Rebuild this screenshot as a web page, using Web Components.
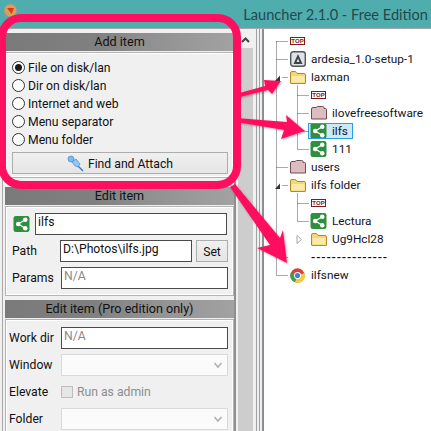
<!DOCTYPE html>
<html>
<head>
<meta charset="utf-8">
<title>Launcher</title>
<style>
  html, body { margin: 0; height: 100%; overflow: hidden; background: #f0f0f0; }
  body { font: 12.2px Roboto, sans-serif; color: #111; }
</style>
</head>
<body>
<launcher-app>
  <lw-titlebar slot="title">Launcher 2.1.0 - Free Edition</lw-titlebar>

  <lw-section slot="left" heading="Add item" gap="9" top="5" bottom="3">
    <lw-radio checked>File on disk/lan</lw-radio>
    <lw-radio>Dir on disk/lan</lw-radio>
    <lw-radio>Internet and web</lw-radio>
    <lw-radio>Menu separator</lw-radio>
    <lw-radio>Menu folder</lw-radio>
    <lw-button wide>Find and Attach</lw-button>
  </lw-section>

  <lw-section slot="left" heading="Edit item" gap="4" top="6" bottom="1">
    <lw-field inset="7" label-width="22" value="ilfs" end="6"><tree-icon slot="lead" kind="share"></tree-icon></lw-field>
    <lw-field inset="6" label-width="48" label="Path" value="D:\Photos\ilfs.jpg" end="41"><lw-button slot="after">Set</lw-button></lw-field>
    <lw-field inset="6" label-width="49" label="Params" value="N/A" muted></lw-field>
  </lw-section>

  <lw-section slot="left" heading="Edit item (Pro edition only)" gap="0" top="7" bottom="0">
    <lw-field inset="3" label-width="52" label="Work dir" value="N/A" muted></lw-field>
    <lw-field inset="3" label-width="52" label="Window" kind="select"></lw-field>
    <lw-field inset="3" label-width="52" label="Elevate" kind="check" value="Run as admin"></lw-field>
    <lw-field inset="3" label-width="52" label="Folder" kind="select"></lw-field>
  </lw-section>

  <tree-view slot="tree">
    <tree-row level="1"><tree-icon kind="top"></tree-icon></tree-row>
    <tree-row level="1" text="ardesia_1.0-setup-1"><tree-icon kind="ardesia"></tree-icon></tree-row>
    <tree-row level="1" text="laxman"><tree-icon kind="folder"></tree-icon></tree-row>
    <tree-row level="2"><tree-icon kind="top"></tree-icon></tree-row>
    <tree-row level="2" text="ilovefreesoftware"><tree-icon kind="closed"></tree-icon></tree-row>
    <tree-row level="2" text="ilfs" selected><tree-icon kind="share"></tree-icon></tree-row>
    <tree-row level="2" text="111"><tree-icon kind="share"></tree-icon></tree-row>
    <tree-row level="1" text="users"><tree-icon kind="closed"></tree-icon></tree-row>
    <tree-row level="1" text="ilfs folder"><tree-icon kind="folder"></tree-icon></tree-row>
    <tree-row level="2"><tree-icon kind="top"></tree-icon></tree-row>
    <tree-row level="2" text="Lectura"><tree-icon kind="share"></tree-icon></tree-row>
    <tree-row level="2" text="Ug9Hcl28"><tree-icon kind="folder"></tree-icon></tree-row>
    <tree-row level="1" separator></tree-row>
    <tree-row level="1" text="ilfsnew"><tree-icon kind="chrome"></tree-icon></tree-row>
  </tree-view>
</launcher-app>

<script>
// Main window: title on top, form column, scrollbar, splitter, tree
class LauncherApp extends HTMLElement {
  constructor() {
    super();
    this.attachShadow({ mode: 'open' }).innerHTML = `
    <style>
      :host { display: flex; flex-direction: column; position: relative; width: 431px; height: 431px; overflow: hidden; }
      .main { flex: 1; display: flex; min-height: 0; border-top: 1px solid #a8a8a8; }
      .left { width: 229px; flex: none; display: flex; flex-direction: column; padding: 4px 0 0 5px; border-right: 2px solid #8f8f8f; position: relative; }
      .left::before { content: ""; position: absolute; left: 2px; top: 0; bottom: 0; width: 1px; background: #a8a8a8; }
      .bar { width: 15px; flex: none; margin-left: 2px; margin-top: 3px; background: #cdcdcd; display: flex; flex-direction: column; }
      .bar div { height: 16px; background: #f0f0f0; display: flex; align-items: center; justify-content: center; }
      .split { width: 6px; flex: none; margin-left: 3px; background: #f0f0f0; border-left: 1px solid #a0a0a0; box-sizing: border-box; }
      .split i { display: block; width: 1px; height: 100%; margin-left: 2px; background: #a0a0a0; }
      .tree { flex: 1; background: #fff; border-left: 2px solid #8a8f94; min-width: 0; }
      svg.marks { position: absolute; left: 0; top: 0; pointer-events: none; }
    </style>
    <slot name="title"></slot>
    <div class="main">
      <div class="left"><slot name="left"></slot></div>
      <div class="bar"><div><svg width="9" height="6" viewBox="0 0 9 6"><path d="M1 5l3.5-3.5L8 5" fill="none" stroke="#444" stroke-width="2"/></svg></div></div>
      <div class="split"><i></i></div>
      <div class="tree"><slot name="tree"></slot></div>
    </div>
    <!-- the pink marks drawn over the screenshot -->
    <svg class="marks" width="431" height="431" viewBox="0 0 431 431">
      <defs><filter id="sh" x="-10%" y="-10%" width="120%" height="120%"><feDropShadow dx="1" dy="1" stdDeviation="1.2" flood-color="#000" flood-opacity=".3"/></filter></defs>
      <g fill="#ff0f5f" filter="url(#sh)">
        <path d="M236 94L265 86L264 80L281 81L272 94L268 90L236 98z"/>
        <path d="M236 118L287 122L286 115L305 131L281 139L284 130L236 122z"/>
        <path d="M230 187L235 184L280 238L283 230L287 263L257 248L270 245z"/>
      </g>
      <rect x="2" y="18" width="235" height="167" rx="19" fill="none" stroke="#ff0f5f" stroke-width="8"/>
    </svg>`;
  }
}

class LwTitlebar extends HTMLElement {
  constructor() {
    super();
    this.attachShadow({ mode: 'open' }).innerHTML = `
    <style>
      :host { display: flex; align-items: center; justify-content: flex-end; height: 28px; flex: none; padding-right: 3px; background: #50adad; color: #24494b; font: 14.6px Lato, sans-serif; position: relative; }
      svg { position: absolute; left: 3px; top: 3px; }
    </style>
    <svg width="15" height="15" viewBox="0 0 15 15">
      <circle cx="7.5" cy="7.5" r="6.5" fill="#d9a05a" stroke="#7f9ea6" stroke-width="1.5" stroke-dasharray="2 1"/>
      <path d="M4 5h7l-2.5 6z" fill="#e8350f"/>
    </svg>
    <span><slot></slot></span>`;
  }
}

// Grey heading strip and the bordered box under it
class LwSection extends HTMLElement {
  constructor() {
    super();
    const heading = this.getAttribute('heading');
    const gap = this.getAttribute('gap') || 0;
    const top = this.getAttribute('top') || 0;
    const bottom = this.getAttribute('bottom') || 0;
    this.attachShadow({ mode: 'open' }).innerHTML = `
    <style>
      :host { display: block; margin-bottom: ${gap}px; }
      .head { height: 18px; line-height: 17px; font-size: 12.6px; text-align: center; color: #111; background: linear-gradient(90deg, #7a7a7a 0, #808080 40%, #8f8f8f 60%, #a2a2a2 100%); }
      .box { border: 1px solid #b4b4b4; box-shadow: inset 0 0 0 1px #fff; margin-top: 1px; padding-top: ${top}px; padding-bottom: ${bottom}px; }
    </style>
    <div class="head">${heading}</div>
    <div class="box"><slot></slot></div>`;
  }
}

class LwRadio extends HTMLElement {
  constructor() {
    super();
    const dot = this.hasAttribute('checked') ? '<i></i>' : '';
    this.attachShadow({ mode: 'open' }).innerHTML = `
    <style>
      :host { display: flex; align-items: center; height: 18px; padding-left: 6px; gap: 3px; }
      b { width: 13px; height: 13px; box-sizing: border-box; border: 1px solid #333; border-radius: 50%; background: #fff; display: flex; align-items: center; justify-content: center; }
      i { width: 7px; height: 7px; border-radius: 50%; background: #1a1a1a; }
      span { padding-top: 1px; }
    </style>
    <b>${dot}</b><span><slot></slot></span>`;
  }
}

class LwButton extends HTMLElement {
  constructor() {
    super();
    const wide = this.hasAttribute('wide');
    this.attachShadow({ mode: 'open' }).innerHTML = `
    <style>
      :host { display: flex; align-items: center; justify-content: center; gap: 4px; box-sizing: border-box; height: 22px; ${wide ? 'margin: 4px 5px 0 6px;' : 'width: 32px;'} border: 1px solid #adadad; background: linear-gradient(#f0f0f0, #e5e5e5); }
      svg { flex: none; }
      span { padding-top: 1px; }
    </style>
    ${wide ? `<svg width="17" height="17" viewBox="0 0 17 17">
      <path d="M10 10l6 6" stroke="#3a6fc0" stroke-width="1.3"/>
      <path d="M5 7l4-3 4 5-2 3-3-1z" fill="#8fc8f2" stroke="#4a86cf" stroke-width=".7"/>
      <circle cx="4" cy="4" r="3" fill="#7cbcec" stroke="#4a86cf" stroke-width=".7"/>
    </svg>` : ''}
    <span><slot></slot></span>`;
  }
}

// One row of the form: label, then input, select or checkbox
class LwField extends HTMLElement {
  constructor() {
    super();
    const inset = this.getAttribute('inset') || 7;
    const labelWidth = this.getAttribute('label-width') || 48;
    const label = this.getAttribute('label') || '';
    const value = this.getAttribute('value') || '';
    const kind = this.getAttribute('kind') || 'input';
    const end = this.getAttribute('end') || 5;
    let control;
    if (kind === 'select') {
      control = `<div class="ctl select"><svg width="8" height="6" viewBox="0 0 8 6"><path d="M.5 1L4 5l3.5-4" fill="none" stroke="#b5b5b5" stroke-width="1.8"/></svg></div>`;
    } else if (kind === 'check') {
      control = `<div class="check"><b></b><span>${value}</span></div>`;
    } else {
      control = `<div class="ctl input ${this.hasAttribute('muted') ? 'muted' : ''}">${value}</div>`;
    }
    this.attachShadow({ mode: 'open' }).innerHTML = `
    <style>
      :host { display: flex; align-items: center; height: 22px; margin-bottom: 5px; padding-left: ${inset}px; padding-right: ${end}px; position: relative; }
      .label { width: ${labelWidth}px; flex: none; white-space: nowrap; }
      .lead { width: ${labelWidth}px; flex: none; display: flex; }
      .ctl { flex: 1; min-width: 0; height: 22px; box-sizing: border-box; line-height: 17px; padding: 0 2px; background: #fff; white-space: nowrap; }
      .input { border: 1px solid #4a4a4a; }
      .muted { color: #8a8a8a; }
      .select { border: 1px solid #d9d9d9; background: #fbfbfb; display: flex; align-items: center; justify-content: flex-end; padding-right: 5px; }
      .check { display: flex; align-items: center; gap: 4px; color: #8d8d8d; }
      .check b { width: 12px; height: 12px; box-sizing: border-box; border: 1px solid #bdbdbd; background: #e6e6e6; }
      ::slotted(lw-button) { position: absolute; right: 5px; top: 0; }
    </style>
    ${label ? `<div class="label">${label}</div>` : `<div class="lead"><slot name="lead"></slot></div>`}
    ${control}
    <slot name="after"></slot>`;
  }
}

// Tree list, the dotted guide lines sit over the rows
class TreeView extends HTMLElement {
  constructor() {
    super();
    const x1 = 12.5, x2 = 33.5; // guide columns inside the tree
    const h = (x, y, len) => `<path d="M${x} ${y}h${len}"/>`;
    const rowY = n => 12.5 + 18 * n;
    const lines = [0, 1, 7, 12, 13].map(n => h(x1, rowY(n), 12)).join('') + h(x1 + 6, rowY(2), 6) + h(x1 + 6, rowY(8), 6)
      + [3, 4, 5, 6, 9, 10].map(n => h(x2, rowY(n), 12)).join('');
    this.attachShadow({ mode: 'open' }).innerHTML = `
    <style>
      :host { display: block; padding-top: 3px; position: relative; }
      svg { position: absolute; left: 0; top: 0; pointer-events: none; }
    </style>
    <slot></slot>
    <svg width="167" height="300" viewBox="0 0 167 300">
      <g fill="none" stroke="#555" stroke-dasharray="1 1">
        <path d="M${x1} ${rowY(0)}V${rowY(13)}"/>
        <path d="M${x2} ${rowY(2) + 8}V${rowY(6)}"/>
        <path d="M${x2} ${rowY(8) + 8}V${rowY(10)}"/>
        ${lines}
      </g>
      <path d="M${x1 - 1.5} ${rowY(2) + 3.5}l5-5.5v5.5z" fill="#333"/>
      <path d="M${x1 - 1.5} ${rowY(8) + 3.5}l5-5.5v5.5z" fill="#333"/>
      <path d="M${x2 - 0.5} ${rowY(11) - 4}l4.5 4-4.5 4z" fill="#fff" stroke="#a6a6a6"/>
    </svg>`;
  }
}

class TreeRow extends HTMLElement {
  constructor() {
    super();
    const level = +this.getAttribute('level');
    const text = this.getAttribute('text') || '';
    const left = level === 1 ? 25 : 46;
    this.attachShadow({ mode: 'open' }).innerHTML = `
    <style>
      :host { display: flex; align-items: center; height: 18px; padding-left: ${left}px; font-size: 11.8px; }
      .ico { width: 17px; display: flex; justify-content: center; flex: none; }
      .txt { margin-left: 4px; padding: 0 2px 0 1px; height: 16px; line-height: 16px; white-space: nowrap; color: #14142a; }
      .wrap { display: flex; align-items: center; }
      :host([selected]) .wrap { outline: 1px solid #2a9fdc; outline-offset: -1px; background: #cde8f6; height: 16px; padding: 0 3px 0 2px; margin-left: -2px; }
      .sep { margin-left: 22px; letter-spacing: 0.8px; color: #111; font-weight: 600; }
    </style>
    ${this.hasAttribute('separator')
      ? `<div class="sep">---------------</div>`
      : `<div class="wrap"><div class="ico"><slot></slot></div>${text ? `<div class="txt">${text}</div>` : ''}</div>`}`;
  }
}

// Small tree icons
const ICONS = {
  share: `<svg width="17" height="16" viewBox="0 0 17 17"><rect width="17" height="17" rx="2.5" fill="#2f8f3f"/><g fill="#fff"><circle cx="12.5" cy="4" r="2.4"/><circle cx="12.5" cy="13" r="2.4"/><circle cx="5" cy="8.5" r="2.4"/></g><path d="M12.5 4L5 8.5l7.5 4.5" fill="none" stroke="#fff" stroke-width="1.4"/></svg>`,
  folder: `<svg width="16" height="13" viewBox="0 0 16 13"><path d="M.5 12V2q0-1.5 1.5-1.5h3.5L7 2.5h7q1.5 0 1.5 1.5v8q0 .5-.5.5H1q-.5 0-.5-.5z" fill="#f4d67a" stroke="#b08a2a"/><path d="M1.5 5h13v6.5h-13z" fill="#fde9a6"/></svg>`,
  closed: `<svg width="16" height="14" viewBox="0 0 16 14"><path d="M.5 13V3q0-1.5 1.5-1.5h3L6.5 .5h5q1.5 0 1.5 1v1h1.5q1 0 1 1V13z" fill="#dcbcc0" stroke="#6d4f52"/></svg>`,
  ardesia: `<svg width="16" height="16" viewBox="0 0 16 16"><rect x=".7" y=".7" width="14.6" height="14.6" rx="2.5" fill="#dfe3e8" stroke="#50545a" stroke-width="1.4"/><path d="M8 3L3.5 13h2.2L8 7.5 10.3 13h2.2z" fill="#3e4248"/><path d="M6 11h4v2H6z" fill="#3e4248"/></svg>`,
  chrome: `<svg width="15" height="15" viewBox="0 0 15 15"><circle cx="7.5" cy="7.5" r="7.2" fill="#d8413a"/><path d="M7.5 7.5L1.2 4A7.2 7.2 0 0 0 5 14.3z" fill="#3aa04f"/><path d="M7.5 7.5L5 14.3A7.2 7.2 0 0 0 14.4 5z" fill="#f6c93c"/><circle cx="7.5" cy="7.5" r="3.5" fill="#fff"/><circle cx="7.5" cy="7.5" r="2.6" fill="#3f7fe0"/></svg>`
};

class TreeIcon extends HTMLElement {
  constructor() {
    super();
    const kind = this.getAttribute('kind');
    this.attachShadow({ mode: 'open' }).innerHTML = `
    <style>
      :host { display: flex; align-items: center; justify-content: center; }
      svg { display: block; }
      .top { box-sizing: border-box; width: 15px; height: 8px; border: 1px solid #7d1a1a; background: #fff; color: #8a1414; font: bold 6px/6px "Liberation Sans", sans-serif; text-align: center; letter-spacing: .1px; }
    </style>
    ${kind === 'top' ? '<div class="top">TOP</div>' : ICONS[kind]}`;
  }
}

customElements.define('lw-titlebar', LwTitlebar);
customElements.define('lw-section', LwSection);
customElements.define('lw-radio', LwRadio);
customElements.define('lw-button', LwButton);
customElements.define('lw-field', LwField);
customElements.define('tree-view', TreeView);
customElements.define('tree-row', TreeRow);
customElements.define('tree-icon', TreeIcon);
customElements.define('launcher-app', LauncherApp);
</script>
</body>
</html>
